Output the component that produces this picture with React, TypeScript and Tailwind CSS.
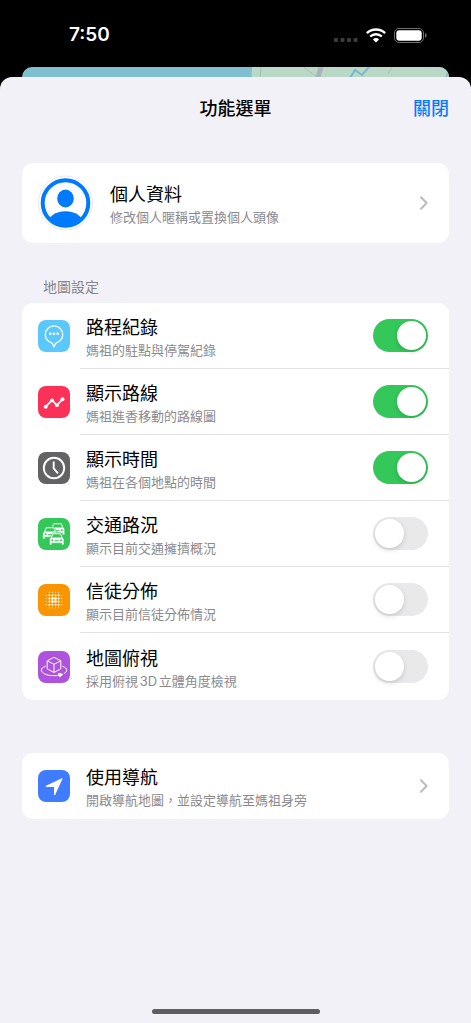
import { useState, type ReactNode } from "react";

interface MapSetting {
  id: string;
  title: string;
  description: string;
  color: string;
  icon: ReactNode;
}

// ─── 圖示 ──────────────────────────────────────────────────
const BubbleIcon = () => (
  <svg viewBox="0 0 32 32" className="h-8 w-8" fill="none" stroke="#fff" strokeWidth="1.3">
    <path d="M16 26.8c-.7-1.2-1.300-3.200-2.200-4-3.900-1-6.500-4.300-6.500-8.200a8.700 8.700 0 0 1 17.400 0c0 3.900-2.600 7.200-6.500 8.200-.9.8-1.500 2.800-2.200 4z" strokeLinejoin="round" />
    <g fill="#fff" stroke="none">
      <circle cx="12.300" cy="13.800" r="1.300" />
      <circle cx="16" cy="13.800" r="1.300" />
      <circle cx="19.700" cy="13.800" r="1.300" />
    </g>
  </svg>
);

const RouteIcon = () => (
  <svg viewBox="0 0 32 32" className="h-8 w-8" fill="#fff">
    <path d="M7.700 20.700 14 14.300l5 5 5.600-6.200" fill="none" stroke="#fff" strokeWidth="1.700" />
    <circle cx="7.700" cy="20.700" r="2" />
    <circle cx="14" cy="14.300" r="1.900" />
    <circle cx="19" cy="19.200" r="1.900" />
    <circle cx="24.500" cy="13.200" r="2" />
  </svg>
);

const ClockIcon = () => (
  <svg viewBox="0 0 32 32" className="h-8 w-8" fill="none" stroke="#fff" strokeWidth="1.900">
    <circle cx="16" cy="16" r="10.200" />
    <path d="M15.700 9.500v7l4.300 4.800" />
  </svg>
);

const Car = ({ x, y }: { x: number; y: number }) => (
  <g transform={`translate(${x} ${y})`}>
    <path d="M1.200 5.400 2.900 1.300Q3.200.4 4.200.4h6.600q1 0 1.300.9l1.700 4.100q1 .6 1 1.700v5.300h-2.500v-1.700H2.700v1.700H.2V7.100q0-1.100 1-1.700z" fill="#fff" stroke="#34c759" strokeWidth=".7" />
    <path d="M2.700 5.100 4.100 1.700h6.800l1.400 3.400z" fill="#34c759" />
    <circle cx="3.200" cy="7.700" r="1" fill="#34c759" />
    <circle cx="11.800" cy="7.700" r="1" fill="#34c759" />
    <path d="M5.500 8.200h4" stroke="#34c759" />
  </g>
);

const TrafficIcon = () => (
  <svg viewBox="0 0 32 32" className="h-8 w-8">
    <Car x={12} y={4.5} />
    <Car x={4.500} y={8.500} />
    <Car x={11.200} y={14.500} />
  </svg>
);

// 點越靠近中心越大
const DOT_OFFSETS = [-2.500, -1.500, -0.5, 0.5, 1.500, 2.500];

const DotsIcon = () => (
  <svg viewBox="0 0 32 32" className="h-8 w-8" fill="#fff">
    {DOT_OFFSETS.map((dx) =>
      DOT_OFFSETS.map((dy) => {
        const distance = Math.hypot(dx, dy);
        if (distance > 3) return null;
        return (
          <circle
            key={`${dx},${dy}`}
            cx={16 + dx * 3.100}
            cy={16 + dy * 3.100}
            r={distance < 1 ? 1.400 : distance < 2.200 ? 1 : 0.6}
          />
        );
      })
    )}
  </svg>
);

const CubeIcon = () => (
  <svg viewBox="0 0 32 32" className="h-8 w-8" fill="none" stroke="#fff" strokeWidth="1" strokeLinejoin="round">
    <path d="M16 6.300 22.800 9.800v8L16 21.500 9.200 17.800v-8zM9.200 9.800 16 13.300l6.800-3.500M16 13.300v8.200" />
    <path d="M7.300 15.300c-2.500 1-4 2.200-4 3.700 0 3.200 5.500 5.700 12.700 5.700 2.700 0 5.200-.3 7-.9M24.700 15.300c2.500 1 4 2.200 4 3.700 0 1.300-.9 2.500-2.400 3.500" strokeLinecap="round" />
    <path d="M20.500 22.500l4.300.8-3 2.700z" fill="#fff" />
  </svg>
);

const LocationIcon = () => (
  <svg viewBox="0 0 32 32" className="h-8 w-8">
    <path d="M24.500 8.700 17.200 24.700q-.8 1.300-1.200-.2v-7.600H8.200q-1.500-.4-.2-1.200L23.900 8.300q.8-.3.6.4z" fill="#fff" />
  </svg>
);

const ProfileIcon = () => (
  <svg viewBox="0 0 56 56" className="h-14 w-14 shrink-0" aria-hidden="true">
    <defs>
      <clipPath id="avatar">
        <circle cx="27.500" cy="28" r="24" />
      </clipPath>
    </defs>
    <circle cx="27.500" cy="28" r="27" fill="#fff" stroke="#e2e2e6" strokeWidth=".8" />
    <circle cx="27.500" cy="28" r="22.800" fill="none" stroke="#007aff" strokeWidth="4" />
    <ellipse cx="27.500" cy="23.500" rx="8.300" ry="9" fill="#007aff" />
    <ellipse cx="27.500" cy="49" rx="18" ry="12.700" fill="#007aff" clipPath="url(#avatar)" />
  </svg>
);

const Chevron = () => (
  <svg viewBox="0 0 10 16" className="h-4 w-[10px] shrink-0" fill="none" aria-hidden="true">
    <path d="M2 2.300 7.600 8 2 13.700" stroke="#bcbcc0" strokeWidth="2" strokeLinecap="round" strokeLinejoin="round" />
  </svg>
);

// ─── 資料 ──────────────────────────────────────────────────
const SETTINGS: MapSetting[] = [
  { id: "stops", title: "路程紀錄", description: "媽祖的駐點與停駕紀錄", color: "bg-[#5ac8fa]", icon: <BubbleIcon /> },
  { id: "route", title: "顯示路線", description: "媽祖進香移動的路線圖", color: "bg-[#fc3158]", icon: <RouteIcon /> },
  { id: "time", title: "顯示時間", description: "媽祖在各個地點的時間", color: "bg-[#636366]", icon: <ClockIcon /> },
  { id: "traffic", title: "交通路況", description: "顯示目前交通擁擠概況", color: "bg-[#34c759]", icon: <TrafficIcon /> },
  { id: "crowd", title: "信徒分佈", description: "顯示目前信徒分佈情況", color: "bg-[#f89500]", icon: <DotsIcon /> },
  { id: "tilt", title: "地圖俯視", description: "採用俯視3D立體角度檢視", color: "bg-[#af52de]", icon: <CubeIcon /> },
];

// ─── 元件 ──────────────────────────────────────────────────
function Texts({ title, description }: { title: string; description: string }) {
  return (
    <span className="flex min-w-0 flex-1 flex-col pt-1 text-left">
      <span className="text-lg leading-6 text-black">{title}</span>
      <span className="text-[13px] leading-5 text-[#8a8a8e] [text-autospace:normal]">{description}</span>
    </span>
  );
}

function IconTile({ color, children }: { color: string; children: ReactNode }) {
  return (
    <span className={`h-8 w-8 shrink-0 overflow-hidden rounded-lg ${color}`} aria-hidden="true">
      {children}
    </span>
  );
}

function StatusBar() {
  return (
    <div className="flex h-[67px] items-center justify-between pr-11 pl-[69px] pt-[3px]">
      <span className="font-['Inter','Noto_Sans_CJK_TC',sans-serif] text-[19px] font-semibold text-white">7:50</span>
      <div className="flex items-center gap-2">
        <svg viewBox="0 0 24 14" className="h-[14px] w-6" fill="#3c3c3e">
          <rect x="0" y="10" width="4" height="4" rx="1.200" />
          <rect x="6.500" y="10" width="4" height="4" rx="1.200" />
          <rect x="13" y="10" width="4" height="4" rx="1.200" />
          <rect x="19.500" y="10" width="4" height="4" rx="1.200" />
        </svg>
        <svg viewBox="0 0 20 15" className="h-[15px] w-5" fill="none" stroke="#fff">
          <path d="M.9 5.100a13.200 13.200 0 0 1 18.200 0M4.200 8.500a8.400 8.400 0 0 1 11.600 0" strokeWidth="2.400" />
          <path d="M10 14.600 6.900 11.500a4.500 4.500 0 0 1 6.200 0z" fill="#fff" stroke="none" />
        </svg>
        <svg viewBox="0 0 33 15" className="h-[15px] w-[33px]">
          <rect x=".5" y=".5" width="29" height="14" rx="4.500" fill="none" stroke="#6e6e6e" />
          <rect x="2.300" y="2.300" width="25.400" height="10.400" rx="3" fill="#fff" />
          <path d="M31 5.200q1.700.6 1.700 2.300T31 9.800z" fill="#6e6e6e" />
        </svg>
      </div>
    </div>
  );
}

function MapPeek() {
  return (
    <div className="mx-[22px] -mb-3 h-[22px] overflow-hidden rounded-t-[10px] bg-[#7fbfd0]">
      <svg viewBox="0 0 427 22" className="h-[22px] w-full" preserveAspectRatio="none" fill="none">
        <path d="M230 0h197v22H229z" fill="#b9d8c5" />
        <path d="M239 0l-2 22M281 0l14 10M370 0l-4 7" stroke="#a9bdb9" />
        <path d="M299 0l-4 14" stroke="#aab4be" strokeWidth="5" />
        <path d="M326 14l7-11 7 5 7-8" stroke="#79b8d0" strokeWidth="2" />
        <path d="M427 2l-4 12" stroke="#aab4be" strokeWidth="2" />
      </svg>
    </div>
  );
}

export default function App() {
  const [enabled, setEnabled] = useState<Record<string, boolean>>({
    stops: true,
    route: true,
    time: true,
  });

  const toggle = (id: string) => {
    setEnabled((prev) => ({ ...prev, [id]: !prev[id] }));
  };

  return (
    <div className="flex min-h-screen flex-col bg-black font-['Inter','Noto_Sans_CJK_TC',sans-serif]">
      <StatusBar />
      <MapPeek />

      <main className="relative flex flex-1 flex-col rounded-t-[12px] bg-[#f2f1f7] px-[22px]">
        {/* 標題列 */}
        <header className="grid h-16 grid-cols-[1fr_auto_1fr] items-center text-lg font-medium">
          <h1 className="col-start-2 text-black">功能選單</h1>
          <button type="button" className="justify-self-end text-[#0a7aff]">
            關閉
          </button>
        </header>

        {/* 個人資料 */}
        <button type="button" className="mt-[22px] flex h-20 items-center gap-4 rounded-[11px] bg-white pr-5 pl-4">
          <ProfileIcon />
          <Texts title="個人資料" description="修改個人暱稱或置換個人頭像" />
          <Chevron />
        </button>

        {/* 地圖設定 */}
        <h2 className="mt-[34px] px-[21px] text-sm leading-5 text-[#85858b]">地圖設定</h2>
        <ul className="mt-[6px] rounded-[11px] bg-white">
          {SETTINGS.map((s) => (
            <li key={s.id} className="group flex h-[66px] items-center pl-4 last:h-[67px]">
              <IconTile color={s.color}>{s.icon}</IconTile>
              <div className="ml-[10px] flex h-full flex-1 items-center border-b border-[#e3e3e6] pr-[21px] pl-[6px] group-last:border-0">
                <label htmlFor={s.id} className="flex flex-1">
                  <Texts title={s.title} description={s.description} />
                </label>
                <input
                  id={s.id}
                  type="checkbox"
                  role="switch"
                  checked={!!enabled[s.id]}
                  onChange={() => toggle(s.id)}
                  className="h-[33px] w-[55px] shrink-0 appearance-none rounded-full bg-[#e9e9eb] p-[2px] transition-colors before:block before:h-[29px] before:w-[29px] before:rounded-full before:bg-white before:shadow-[0_2px_5px_rgba(0,0,0,0.15)] before:transition-transform checked:bg-[#34c759] checked:before:translate-x-[22px]"
                />
              </div>
            </li>
          ))}
        </ul>

        {/* 導航 */}
        <button type="button" className="mt-[53px] flex h-[66px] items-center gap-4 rounded-[11px] bg-white pr-5 pl-4">
          <IconTile color="bg-[#3f7cff]">
            <LocationIcon />
          </IconTile>
          <Texts title="使用導航" description="開啟導航地圖，並設定導航至媽祖身旁" />
          <Chevron />
        </button>

        <div className="mx-auto mt-auto mb-[9px] h-[5px] w-[168px] rounded-full bg-[#5e5e60]" />
      </main>
    </div>
  );
}
